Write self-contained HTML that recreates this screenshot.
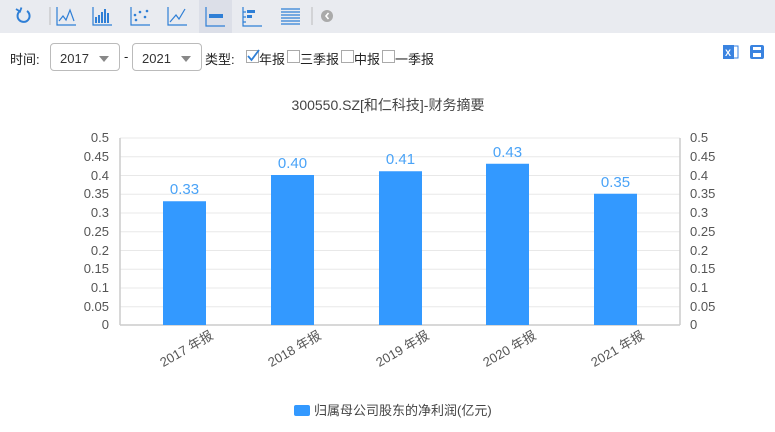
<!DOCTYPE html>
<html><head><meta charset="utf-8"><style>
*{margin:0;padding:0;box-sizing:border-box}
body{width:775px;height:432px;background:#fff;font-family:"Liberation Sans","Noto Sans CJK SC",sans-serif;position:relative;overflow:hidden;color:#333}
.tb{position:absolute;left:0;top:0;width:775px;height:33px;background:#e9ebf0}
.sel{position:absolute;left:199px;top:0;width:33px;height:33px;background:#dcdfe8}
.ic{position:absolute;top:0}
.box{position:absolute;top:43px;height:28px;border:1px solid #bbb;border-radius:4px;font-size:13px;padding:7px 0 0 9px;color:#333}
.arr{position:absolute;right:10px;top:12px;width:0;height:0;border-left:5px solid transparent;border-right:5px solid transparent;border-top:6px solid #888}
.cb{position:absolute;top:50px;width:13px;height:13px;border:1px solid #aaa;background:#fff}
.t{position:absolute;top:49px;font-size:13px;color:#222}
</style></head><body>
<div class="tb"></div><div class="sel"></div>
<svg class="ic" width="775" height="33" style="left:0">
 <g fill="none" stroke="#2f7fd6" stroke-width="2">
  <path d="M19.5 11.5 A6 6 0 1 0 27 11"/><path d="M16 9 L20 11.5 L21.5 7.5" stroke-width="1.8"/>
 </g>
 <line x1="50" y1="7" x2="50" y2="25" stroke="#bbb"/>
 <g fill="none" stroke="#2f7fd6" stroke-width="1.2">
  <path d="M57 7 V25 H76"/><path d="M59 21 L63 16 L66 20 L70 10 L74 21"/>
  <path d="M93 7 V25 H112"/><path d="M96 23V17M99 23V15M102 23V12M105 23V9M108 23V13" stroke-width="2"/>
  <path d="M131 7 V25 H150"/>
  <path d="M168 7 V25 H187"/><path d="M170 22 L176 15 L179 19 L185 9"/>
  <path d="M206 7 V26 H225"/>
  <path d="M243 7 V26 H262"/><path d="M243 12h3M243 17h3M243 22h3"/>
  <path d="M281 9H300M281 12H300M281 15H300M281 18H300M281 21H300M281 24H300"/>
 </g>
 <g fill="#2f7fd6"><circle cx="135" cy="15" r="1.3"/><circle cx="140" cy="12" r="1.3"/><circle cx="145" cy="17" r="1.3"/><circle cx="136" cy="20" r="1.3"/><circle cx="147" cy="11" r="1.3"/>
  <rect x="209" y="14" width="14" height="4"/><rect x="247" y="10" width="8" height="3"/><rect x="247" y="15" width="5" height="3"/></g>
 <line x1="312" y1="7" x2="312" y2="25" stroke="#bbb"/>
 <circle cx="327" cy="16" r="6" fill="#aaa"/><path d="M328.5 13 L326 16 L328.5 19" stroke="#fff" stroke-width="1.6" fill="none"/>
</svg>
<div class="t" style="left:10px">时间:</div>
<div class="box" style="left:50px;width:70px">2017<div class="arr"></div></div>
<div class="t" style="left:124px">-</div>
<div class="box" style="left:132px;width:70px">2021<div class="arr"></div></div>
<div class="t" style="left:205px">类型:</div>
<div class="cb" style="left:246px"></div><svg style="position:absolute;left:246px;top:49px" width="14" height="14"><path d="M2 7 L5.5 11 L13 1" stroke="#2f7fd6" stroke-width="1.8" fill="none"/></svg>
<div class="t" style="left:259px">年报</div>
<div class="cb" style="left:287px"></div><div class="t" style="left:300px">三季报</div>
<div class="cb" style="left:341px"></div><div class="t" style="left:354px">中报</div>
<div class="cb" style="left:382px"></div><div class="t" style="left:395px">一季报</div>
<svg style="position:absolute;left:723px;top:44px" width="44" height="18">
 <rect x="0" y="1" width="11" height="14" fill="#3a83e0"/><rect x="10" y="2" width="5" height="12" fill="none" stroke="#3a83e0"/>
 <text x="2" y="12" font-size="9" fill="#fff" font-family="Liberation Sans" font-weight="bold">X</text>
 <rect x="27" y="1" width="14" height="14" rx="2" fill="#3a83e0"/><rect x="30" y="3" width="8" height="3" fill="#fff"/><rect x="30" y="9" width="8" height="4" fill="#fff"/>
</svg>
<svg style="position:absolute;left:0;top:0" width="775" height="432" font-family="Liberation Sans, Noto Sans CJK SC, sans-serif">
 <text x="388" y="110" font-size="14" fill="#444" text-anchor="middle">300550.SZ[和仁科技]-财务摘要</text>
 <g stroke="#e8e8e8">
  <line x1="120" x2="680" y1="138" y2="138"/><line x1="120" x2="680" y1="156.75" y2="156.75"/><line x1="120" x2="680" y1="175.5" y2="175.5"/><line x1="120" x2="680" y1="194.25" y2="194.25"/><line x1="120" x2="680" y1="213" y2="213"/><line x1="120" x2="680" y1="231.75" y2="231.75"/><line x1="120" x2="680" y1="250.5" y2="250.5"/><line x1="120" x2="680" y1="269.25" y2="269.25"/><line x1="120" x2="680" y1="288" y2="288"/><line x1="120" x2="680" y1="306.75" y2="306.75"/>
 </g>
 <g stroke="#ccc" stroke-width="1.5"><line x1="120" y1="138" x2="120" y2="325"/><line x1="680" y1="138" x2="680" y2="325"/><line x1="120" y1="325" x2="680" y2="325"/></g>
 <g font-size="13" fill="#555">
  <g text-anchor="end"><text x="109" y="142">0.5</text><text x="109" y="161">0.45</text><text x="109" y="180">0.4</text><text x="109" y="198">0.35</text><text x="109" y="217">0.3</text><text x="109" y="236">0.25</text><text x="109" y="255">0.2</text><text x="109" y="273">0.15</text><text x="109" y="292">0.1</text><text x="109" y="311">0.05</text><text x="109" y="329">0</text></g>
  <g><text x="690" y="142">0.5</text><text x="690" y="161">0.45</text><text x="690" y="180">0.4</text><text x="690" y="198">0.35</text><text x="690" y="217">0.3</text><text x="690" y="236">0.25</text><text x="690" y="255">0.2</text><text x="690" y="273">0.15</text><text x="690" y="292">0.1</text><text x="690" y="311">0.05</text><text x="690" y="329">0</text></g>
 </g>
 <g fill="#3399ff">
  <rect x="163" y="201.25" width="43" height="123.75"/>
  <rect x="271" y="175" width="43" height="150"/>
  <rect x="379" y="171.25" width="43" height="153.75"/>
  <rect x="486" y="163.75" width="43" height="161.25"/>
  <rect x="594" y="193.75" width="43" height="131.25"/>
 </g>
 <g font-size="15" fill="#4aa3f7" text-anchor="middle">
  <text x="184.5" y="194">0.33</text><text x="292.5" y="168">0.40</text><text x="400.5" y="164">0.41</text><text x="507.5" y="157">0.43</text><text x="615.5" y="187">0.35</text>
 </g>
 <g font-size="13" fill="#555" text-anchor="end">
  <text transform="translate(214,338) rotate(-30)">2017 年报</text>
  <text transform="translate(322,338) rotate(-30)">2018 年报</text>
  <text transform="translate(430,338) rotate(-30)">2019 年报</text>
  <text transform="translate(537,338) rotate(-30)">2020 年报</text>
  <text transform="translate(645,338) rotate(-30)">2021 年报</text>
 </g>
 <rect x="294" y="405" width="16" height="11" rx="2" fill="#3399ff"/>
 <text x="314" y="415" font-size="13" fill="#444">归属母公司股东的净利润(亿元)</text>
</svg>
</body></html>
